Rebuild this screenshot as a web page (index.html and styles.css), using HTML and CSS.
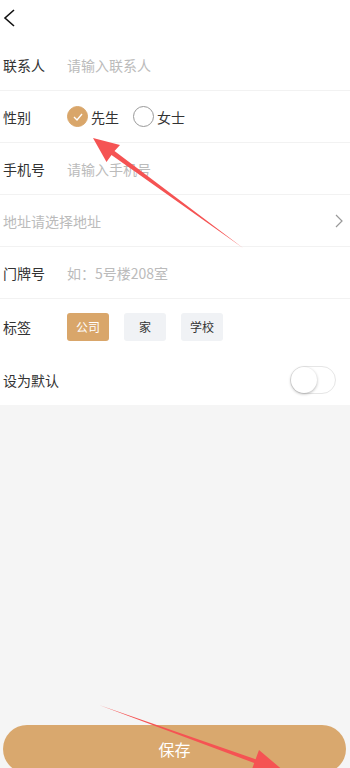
FILE: index.html
```html
<!DOCTYPE html>
<html lang="zh">
<head>
    <meta charset="UTF-8">
    <meta name="viewport" content="width=device-width, initial-scale=1.0">
    <title>编辑地址</title>
    <link rel="stylesheet" href="styles.css">
</head>
<body>

    <!-- 顶部返回 -->
    <div class="header">
        <svg class="back" width="16" height="20" viewBox="0 0 16 20">
            <polyline points="13,2 4,10 13,18" fill="none" stroke="#111" stroke-width="1.6"/>
        </svg>
    </div>

    <!-- 表单 -->
    <div class="form">
        <div class="row">
            <span class="label">联系人</span>
            <span class="placeholder">请输入联系人</span>
        </div>
        <div class="row">
            <span class="label">性别</span>
            <div class="radio">
                <span class="circle checked">
                    <svg width="12" height="10" viewBox="0 0 12 10">
                        <polyline points="2,5 5,8 10,2" fill="none" stroke="#fff" stroke-width="1.4"/>
                    </svg>
                </span>
                <span>先生</span>
            </div>
            <div class="radio">
                <span class="circle"></span>
                <span>女士</span>
            </div>
        </div>
        <div class="row">
            <span class="label">手机号</span>
            <span class="placeholder">请输入手机号</span>
        </div>
        <div class="row">
            <span class="placeholder address">地址请选择地址</span>
            <svg class="more" width="8" height="14" viewBox="0 0 8 14">
                <polyline points="1,1 7,7 1,13" fill="none" stroke="#999" stroke-width="1.2"/>
            </svg>
        </div>
        <div class="row">
            <span class="label">门牌号</span>
            <span class="placeholder">如：5号楼208室</span>
        </div>
        <div class="row tags-row">
            <span class="label">标签</span>
            <span class="tag active">公司</span>
            <span class="tag">家</span>
            <span class="tag">学校</span>
        </div>
        <div class="row default-row">
            <span class="label">设为默认</span>
            <span class="switch"><span class="knob"></span></span>
        </div>
    </div>

    <div class="spacer"></div>

    <div class="footer">
        <button class="save">保存</button>
    </div>

    <!-- 标注箭头 -->
    <svg class="marks" width="350" height="768" viewBox="0 0 350 768">
        <polygon points="93,138 120,145 114.5,151 243,248 111.5,155 106.5,162" fill="#f55353"/>
        <polygon points="285,772 259,750 255.6,759.3 99,705 254.2,763.1 250.8,772.5" fill="#f55353"/>
    </svg>
</body>
</html>
```

FILE: styles.css
```css
html, body {
    height: 100%;
}

body {
    margin: 0;
    font-family: "Noto Sans CJK SC", "Noto Sans", sans-serif;
    background-color: #f5f5f5;
    display: flex;
    flex-direction: column;
    overflow: hidden;
    position: relative;
}

.header {
    height: 39px;
    background-color: #fff;
    display: flex;
    align-items: center;
    padding-left: 1px;
}

.back {
    margin-top: -3px;
}

.form {
    background-color: #fff;
}

.row {
    height: 51px;
    border-bottom: 1px solid #f2f2f2;
    display: flex;
    align-items: center;
    padding: 0 3px;
    font-size: 14px;
    color: #333;
}

.label {
    width: 64px;
}

.placeholder {
    color: #bbb;
}

.address {
    flex: 1;
}

.more {
    margin-right: 4px;
}

.radio {
    display: flex;
    align-items: center;
    margin-right: 14px;
}

.circle {
    width: 19px;
    height: 19px;
    border: 1px solid #999;
    border-radius: 50%;
    margin-right: 3px;
    display: flex;
    justify-content: center;
    align-items: center;
}

.circle.checked {
    background-color: #d9a66a;
    border-color: #d9a66a;
}

.tags-row {
    height: 56px;
    border-bottom: none;
}

.tag {
    width: 42px;
    height: 28px;
    line-height: 28px;
    text-align: center;
    border-radius: 3px;
    font-size: 12px;
    background-color: #f0f2f5;
    margin-right: 15px;
}

.tag.active {
    background-color: #d9a66a;
    color: #fff;
}

.default-row {
    height: 50px;
    border-bottom: none;
    justify-content: space-between;
}

.switch {
    width: 44px;
    height: 26px;
    border: 1px solid #e6e6e6;
    border-radius: 14px;
    margin-right: 11px;
    display: flex;
    align-items: center;
}

.knob {
    width: 26px;
    height: 26px;
    border-radius: 50%;
    background-color: #fff;
    box-shadow: 0 1px 3px rgba(0, 0, 0, 0.3);
}

.spacer {
    flex: 1;
}

.footer {
    padding: 0 4px 0 3px;
    margin-bottom: -5px;
}

.save {
    width: 100%;
    height: 48px;
    border: none;
    border-radius: 24px;
    background-color: #d9a86e;
    color: #fff;
    font-family: inherit;
    font-size: 16px;
    display: block;
}

.marks {
    position: absolute;
    left: 0;
    top: 0;
    pointer-events: none;
}
```
